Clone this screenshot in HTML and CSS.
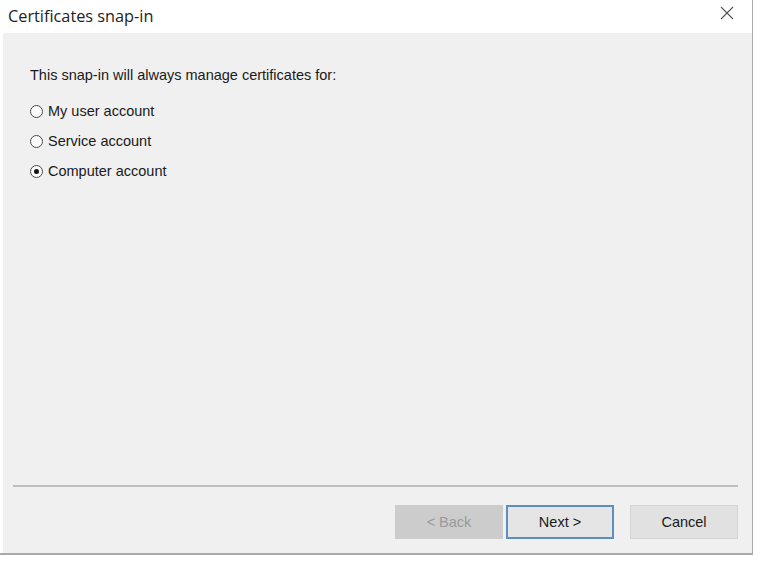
FILE: index.html
```html
<!DOCTYPE html>
<html>
<head>
<meta charset="utf-8">
<link rel="stylesheet" href="styles.css">
</head>
<body>
<div class="dialog">
  <div class="titlebar">
    <span class="title">Certificates snap-in</span>
    <svg class="close" width="14" height="14" viewBox="0 0 14 14"><path d="M1 1 L13 13 M13 1 L1 13" stroke="#555" stroke-width="1.1" fill="none"/></svg>
  </div>
  <div class="body">
    <div class="content">
      <p class="lead">This snap-in will always manage certificates for:</p>
      <div class="options">
        <label class="option"><span class="radio"></span>My user account</label>
        <label class="option"><span class="radio"></span>Service account</label>
        <label class="option"><span class="radio checked"></span>Computer account</label>
      </div>
    </div>
    <div class="footer">
      <div class="separator"></div>
      <div class="buttons">
        <button class="btn disabled">&lt; Back</button>
        <button class="btn default">Next &gt;</button>
        <button class="btn cancel">Cancel</button>
      </div>
    </div>
  </div>
</div>
</body>
</html>
```
FILE: styles.css
```css
html, body {
  margin: 0;
  padding: 0;
  background: #ffffff;
}
body {
  width: 762px;
  height: 562px;
  overflow: hidden;
  font-family: "Liberation Sans", Arial, sans-serif;
}
.dialog {
  width: 752px;
  height: 553px;
  border-right: 1px solid #a9a9a9;
  border-bottom: 2px solid #a9a9a9;
  display: flex;
  flex-direction: column;
  background: #ffffff;
}
.titlebar {
  height: 33px;
  display: flex;
  align-items: center;
  justify-content: space-between;
  padding: 0 18px 0 8px;
  flex: none;
}
.title {
  font-family: "Open Sans", "Noto Sans", sans-serif;
  font-size: 16.3px;
  color: #222;
  margin-top: -2px;
}
.close {
  margin-top: -8px;
}
.body {
  flex: 1;
  margin-left: 3px;
  background: #f0f0f0;
  display: flex;
  flex-direction: column;
}
.content {
  flex: 1;
  padding: 34px 0 0 27px;
}
.lead {
  margin: 0;
  font-size: 14.5px;
  color: #1a1a1a;
  line-height: 16px;
}
.options {
  display: flex;
  flex-direction: column;
  gap: 13px;
  margin-top: 20px;
}
.option {
  display: flex;
  align-items: center;
  gap: 5px;
  font-size: 14.5px;
  color: #1a1a1a;
  line-height: 17px;
}
.radio {
  width: 11px;
  height: 11px;
  border: 1px solid #4a4a4a;
  border-radius: 50%;
  background: #fbfbfb;
  position: relative;
  flex: none;
}
.radio.checked::after {
  content: "";
  position: absolute;
  left: 3px;
  top: 3px;
  width: 5px;
  height: 5px;
  border-radius: 50%;
  background: #111;
}
.footer {
  padding: 0 14px 14px 10px;
}
.separator {
  height: 0;
  border-top: 2px solid #bdbdbd;
  margin-bottom: 18px;
}
.buttons {
  display: flex;
  justify-content: flex-end;
}
.btn {
  width: 108px;
  height: 34px;
  font-family: "Liberation Sans", Arial, sans-serif;
  font-size: 14.5px;
  color: #1a1a1a;
  background: #e1e1e1;
  border: 1px solid #d0d0d0;
  padding: 0;
  margin: 0;
}
.btn.disabled {
  background: #cccccc;
  border-color: #cccccc;
  color: #9a9a9a;
  margin-right: 3px;
}
.btn.default {
  border: 2px solid #5b8fbf;
  background: #e5e5e5;
  margin-right: 16px;
}
.btn.cancel {
  border-color: #d4d4d4;
}
```
